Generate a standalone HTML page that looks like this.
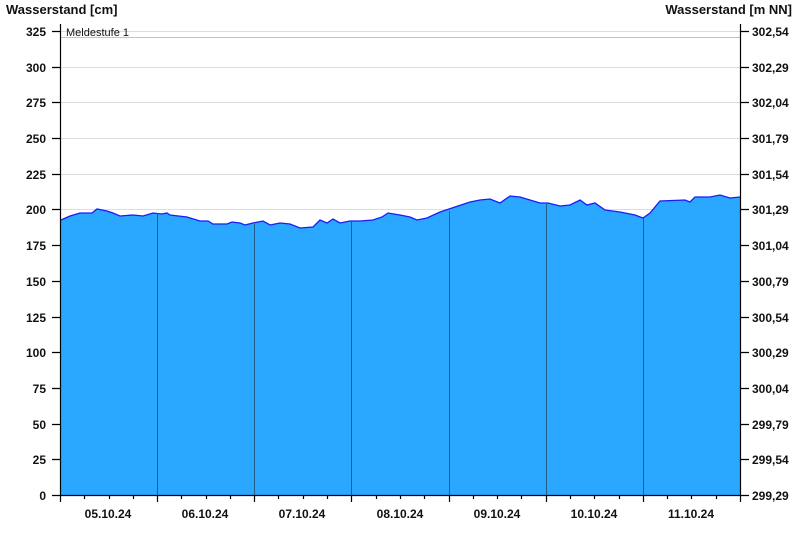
<!DOCTYPE html>
<html><head><meta charset="utf-8"><style>
html,body{margin:0;padding:0;background:#fff;width:800px;height:550px;overflow:hidden}
svg text{font-family:"Liberation Sans",Arial,sans-serif;font-size:12px;fill:#111}
</style></head><body>
<svg width="800" height="550" viewBox="0 0 800 550" xmlns="http://www.w3.org/2000/svg">
<g stroke="#ddd" stroke-width="1">
<line x1="61" x2="740" y1="31.5" y2="31.5"/><line x1="61" x2="740" y1="67.5" y2="67.5"/><line x1="61" x2="740" y1="102.5" y2="102.5"/><line x1="61" x2="740" y1="138.5" y2="138.5"/><line x1="61" x2="740" y1="174.5" y2="174.5"/><line x1="61" x2="740" y1="209.5" y2="209.5"/>
</g>
<line x1="61" x2="740" y1="37.5" y2="37.5" stroke="#f5c04a" stroke-width="1"/>
<polygon fill="#2aa8ff" stroke="none" points="61,495 61,220 70,216 80,213 92,213 97,209 107,211 113,213 120,216 133,215 143,216 153,213 162,214 167,213 170,215 187,217 200,221 208,221 213,224 227,224 232,222 240,223 245,225 253,223 263,221 270,225 280,223 290,224 300,228 313,227 320,220 327,223 333,219 340,223 350,221 360,221 373,220 382,217 388,213 400,215 410,217 417,220 427,218 440,212 455,207 470,202 480,200 490,199 500,203 510,196 520,197 530,200 540,203 548,203 560,206 570,205 580,200 587,205 595,203 605,210 620,212 635,215 643,218 650,213 660,201 685,200 690,202 695,197 710,197 720,195 730,198 740,197 740,495"/>
<polyline fill="none" stroke="#1a1aff" stroke-width="1.3" points="61,220 70,216 80,213 92,213 97,209 107,211 113,213 120,216 133,215 143,216 153,213 162,214 167,213 170,215 187,217 200,221 208,221 213,224 227,224 232,222 240,223 245,225 253,223 263,221 270,225 280,223 290,224 300,228 313,227 320,220 327,223 333,219 340,223 350,221 360,221 373,220 382,217 388,213 400,215 410,217 417,220 427,218 440,212 455,207 470,202 480,200 490,199 500,203 510,196 520,197 530,200 540,203 548,203 560,206 570,205 580,200 587,205 595,203 605,210 620,212 635,215 643,218 650,213 660,201 685,200 690,202 695,197 710,197 720,195 730,198 740,197"/>
<g stroke="#1f5f8a" stroke-width="1">
<line x1="157.5" x2="157.5" y1="213" y2="495"/><line x1="254.5" x2="254.5" y1="224" y2="495"/><line x1="351.5" x2="351.5" y1="221" y2="495"/><line x1="449.5" x2="449.5" y1="211" y2="495"/><line x1="546.5" x2="546.5" y1="203" y2="495"/><line x1="643.5" x2="643.5" y1="218" y2="495"/>
</g>
<g stroke="#000" stroke-width="1.2">
<line x1="60.5" x2="60.5" y1="24" y2="502"/><line x1="740.5" x2="740.5" y1="24" y2="495"/><line x1="52" x2="740" y1="495.5" y2="495.5"/>
<path d="M52 31.5h8M52 67.5h8M52 102.5h8M52 138.5h8M52 174.5h8M52 209.5h8M52 245.5h8M52 281.5h8M52 317.5h8M52 352.5h8M52 388.5h8M52 424.5h8M52 459.5h8"/>
<path d="M741 31.5h8M741 67.5h8M741 102.5h8M741 138.5h8M741 174.5h8M741 209.5h8M741 245.5h8M741 281.5h8M741 317.5h8M741 352.5h8M741 388.5h8M741 424.5h8M741 459.5h8M741 495.5h8"/>
<path d="M157.5 495v7M254.5 495v7M351.5 495v7M449.5 495v7M546.5 495v7M643.5 495v7M740.5 495v7"/>
<path d="M84.5 495v4M109.5 495v4M133.5 495v4M181.5 495v4M206.5 495v4M230.5 495v4M278.5 495v4M303.5 495v4M327.5 495v4M376.5 495v4M400.5 495v4M424.5 495v4M473.5 495v4M497.5 495v4M521.5 495v4M570.5 495v4M594.5 495v4M619.5 495v4M667.5 495v4M691.5 495v4M716.5 495v4"/>
</g>
<text x="6" y="14" font-weight="bold" style="font-size:13px">Wasserstand [cm]</text>
<text x="792" y="14" font-weight="bold" text-anchor="end" style="font-size:13px">Wasserstand [m NN]</text>
<text x="66" y="36" style="font-size:11px">Meldestufe 1</text>
<g font-weight="bold" text-anchor="end">
<text x="46" y="36">325</text><text x="46" y="72">300</text><text x="46" y="107">275</text><text x="46" y="143">250</text><text x="46" y="179">225</text><text x="46" y="214">200</text><text x="46" y="250">175</text><text x="46" y="286">150</text><text x="46" y="322">125</text><text x="46" y="357">100</text><text x="46" y="393">75</text><text x="46" y="429">50</text><text x="46" y="464">25</text><text x="46" y="500">0</text>
</g>
<g font-weight="bold">
<text x="752" y="36">302,54</text><text x="752" y="72">302,29</text><text x="752" y="107">302,04</text><text x="752" y="143">301,79</text><text x="752" y="179">301,54</text><text x="752" y="214">301,29</text><text x="752" y="250">301,04</text><text x="752" y="286">300,79</text><text x="752" y="322">300,54</text><text x="752" y="357">300,29</text><text x="752" y="393">300,04</text><text x="752" y="429">299,79</text><text x="752" y="464">299,54</text><text x="752" y="500">299,29</text>
</g>
<g font-weight="bold" text-anchor="middle">
<text x="108" y="518">05.10.24</text><text x="205" y="518">06.10.24</text><text x="302" y="518">07.10.24</text><text x="400" y="518">08.10.24</text><text x="497" y="518">09.10.24</text><text x="594" y="518">10.10.24</text><text x="691" y="518">11.10.24</text>
</g>
</svg>
</body></html>
